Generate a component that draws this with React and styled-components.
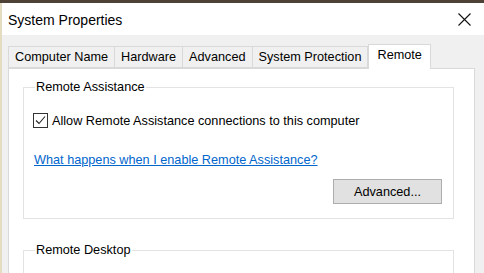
import React from "react";
import styled, { createGlobalStyle } from "styled-components";

const GlobalStyle = createGlobalStyle`
  html, body {
    margin: 0;
    padding: 0;
    background: #f0f0f0;
  }
  #root {
    width: 484px;
    height: 273px;
    overflow: hidden;
  }
`;

const Desktop = styled.div`
  width: 484px;
  height: 273px;
  display: flex;
  flex-direction: column;
  background: #4e4136;
  padding-top: 3px;
  box-sizing: border-box;
  font-family: "Liberation Sans", Arial, sans-serif;
  color: #000;
`;

const Window = styled.div`
  flex: 1;
  display: flex;
  flex-direction: column;
  border-left: 2px solid #e4dcc0;
  background: #f0f0f0;
  overflow: hidden;
`;

const TitleBar = styled.div`
  height: 32px;
  flex-shrink: 0;
  background: #fff;
  display: flex;
  align-items: center;
  justify-content: space-between;
  padding: 0 13px 0 6px;
`;

const Title = styled.span`
  font-size: 14px;
  margin-top: 1px;
`;

const Close = styled.svg`
  width: 13px;
  height: 13px;
`;

const Body = styled.div`
  flex: 1;
  display: flex;
  flex-direction: column;
  padding: 8px 7px 0 6px;
`;

const TabRow = styled.div`
  display: flex;
  align-items: flex-end;
  height: 25px;
  position: relative;
  z-index: 1;
`;

const Tab = styled.div`
  height: ${(p) => (p.$active ? 25 : 22)}px;
  box-sizing: border-box;
  padding: 0 ${(p) => (p.$active ? 8 : 6)}px;
  display: flex;
  align-items: center;
  font-size: 12.7px;
  background: ${(p) => (p.$active ? "#fff" : "#f0f0f0")};
  border: 1px solid #d9d9d9;
  border-bottom: ${(p) => (p.$active ? "none" : "1px solid #d9d9d9")};
  border-left: ${(p) => (p.$first || p.$active ? "1px solid #d9d9d9" : "none")};
  margin-bottom: ${(p) => (p.$active ? -1 : 0)}px;
  padding-bottom: ${(p) => (p.$active ? 4 : 0)}px;
`;

const Panel = styled.div`
  flex: 1;
  background: #fff;
  border: 1px solid #d9d9d9;
  border-bottom: none;
  margin-right: 2px;
  padding: 11px 20px 0 14px;
  display: flex;
  flex-direction: column;
  gap: 24px;
`;

const Group = styled.fieldset`
  margin: 0;
  border: 1px solid #e3e3e3;
  padding: 19px 10px 14px 9px;
  min-height: ${(p) => p.$min || 0}px;
`;

const Legend = styled.legend`
  font-size: 12.7px;
  padding: 0 1px;
  margin-left: 2px;
`;

const CheckRow = styled.label`
  display: flex;
  align-items: center;
  gap: 4px;
  font-size: 12.7px;
`;

const Box = styled.span`
  width: 13px;
  height: 13px;
  border: 1px solid #333;
  display: flex;
  align-items: center;
  justify-content: center;
  background: #fff;
`;

const Link = styled.a`
  display: block;
  margin-top: 25px;
  margin-left: 1px;
  color: #0066cc;
  text-decoration: underline;
  font-size: 12.7px;
`;

const ButtonRow = styled.div`
  display: flex;
  justify-content: flex-end;
  margin-top: 12px;
  padding-right: 1px;
`;

const Button = styled.button`
  width: 109px;
  height: 25px;
  background: #e1e1e1;
  border: 1px solid #adadad;
  font-family: inherit;
  font-size: 12.7px;
  color: #000;
  padding: 0;
`;

const tabs = ["Computer Name", "Hardware", "Advanced", "System Protection", "Remote"];

export default function App() {
  return (
    <>
      <GlobalStyle />
      <Desktop>
        <Window>
          <TitleBar>
            <Title>System Properties</Title>
            <Close viewBox="0 0 13 13">
              <path d="M0.5 0.5 L12.5 12.5 M12.5 0.5 L0.5 12.5" stroke="#111" strokeWidth="1.1" />
            </Close>
          </TitleBar>
          <Body>
            <TabRow>
              {tabs.map((t, i) => (
                <Tab key={t} $first={i === 0} $active={t === "Remote"}>
                  {t}
                </Tab>
              ))}
            </TabRow>
            <Panel>
              <Group>
                <Legend>Remote Assistance</Legend>
                <CheckRow>
                  <Box>
                    <svg width="11" height="11" viewBox="0 0 11 11">
                      <path d="M1 5.5 L4 8.5 L10 1.5" fill="none" stroke="#222" strokeWidth="1.1" />
                    </svg>
                  </Box>
                  Allow Remote Assistance connections to this computer
                </CheckRow>
                <Link href="#">What happens when I enable Remote Assistance?</Link>
                <ButtonRow>
                  <Button>Advanced...</Button>
                </ButtonRow>
              </Group>
              <Group $min={60}>
                <Legend>Remote Desktop</Legend>
              </Group>
            </Panel>
          </Body>
        </Window>
      </Desktop>
    </>
  );
}
